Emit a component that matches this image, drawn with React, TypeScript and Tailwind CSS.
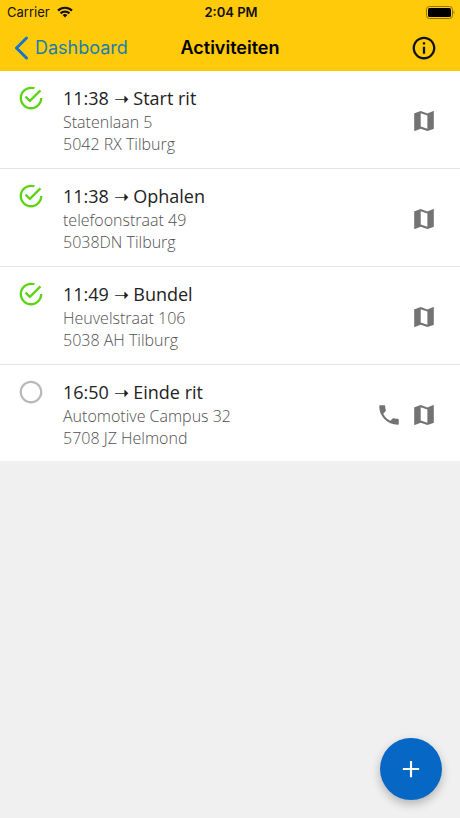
import { IoMdAdd, IoMdCall, IoMdCheckmarkCircleOutline, IoMdInformationCircleOutline, IoMdRadioButtonOff } from 'react-icons/io';

type Activity = {
  id: number;
  time: string;
  title: string;
  street: string;
  city: string;
  done: boolean;
  phone?: boolean;
};

const activities: Activity[] = [
  { id: 1, time: '11:38', title: 'Start rit', street: 'Statenlaan 5', city: '5042 RX Tilburg', done: true },
  { id: 2, time: '11:38', title: 'Ophalen', street: 'telefoonstraat 49', city: '5038DN Tilburg', done: true },
  { id: 3, time: '11:49', title: 'Bundel', street: 'Heuvelstraat 106', city: '5038 AH Tilburg', done: true },
  { id: 4, time: '16:50', title: 'Einde rit', street: 'Automotive Campus 32', city: '5708 JZ Helmond', done: false, phone: true },
];

function StatusBar() {
  return (
    <div className="grid grid-cols-3 items-center h-6 pl-[7px] pr-[5px] text-[13px] leading-6">
      <div className="flex items-center gap-[7px]">
        <span>Carrier</span>
        <svg className="w-4 h-3" viewBox="0 0 16 12" fill="none" stroke="currentColor" strokeWidth="2.2">
          <path d="M1 4.6a10 10 0 0 1 14 0" />
          <path d="M3.6 7.4a6.3 6.3 0 0 1 8.8 0" />
          <path d="M5.6 9.1a3.5 3.5 0 0 1 4.8 0L8 11.6z" fill="currentColor" stroke="none" />
        </svg>
      </div>
      <span className="text-center font-semibold">2:04 PM</span>
      <svg className="w-[29px] h-[13px] justify-self-end" viewBox="0 0 29 13">
        <rect x="0.5" y="0.5" width="26" height="12" rx="3" fill="none" stroke="#8f7100" />
        <rect x="2" y="2" width="23" height="9" rx="1.5" fill="#000" />
        <path d="M27.6 4.5c1.2.5 1.2 3.5 0 4z" fill="#8f7100" />
      </svg>
    </div>
  );
}

function MapIcon() {
  return (
    <svg className="w-5 h-5" viewBox="0 0 20 20" fill="currentColor" fillRule="evenodd">
      <path d="M.6 2.3 6.7 0l6.7 2.4L19.3.1c.3-.1.5 0 .5.3v17c0 .3-.1.4-.4.5L13.4 20l-6.7-2.3-6 2.2c-.3.1-.5 0-.5-.3v-17c0-.2.1-.3.4-.3zM6.7 2.2v13.3l6.7 2.3V4.5z" />
    </svg>
  );
}

function ActivityRow({ activity }: { activity: Activity }) {
  return (
    <li className="flex items-center pl-[17px] pr-[26px] pt-[15px] pb-[13px] border-b border-[#e4e4e4] last:border-b-0 last:pb-3">
      <div className="w-[46px] shrink-0 self-start -mt-0.5">
        {activity.done ? (
          <IoMdCheckmarkCircleOutline className="w-7 h-7 text-[#5bd310]" />
        ) : (
          <IoMdRadioButtonOff className="w-7 h-7 text-[#b9b9b9]" />
        )}
      </div>
      <div className="flex-1 min-w-0">
        <h2 className="text-[18px] leading-[25px] text-[#222]">
          {activity.time} ➝ {activity.title}
        </h2>
        <p className="text-[16px] leading-[22px] font-light text-[#505050]">{activity.street}</p>
        <p className="text-[16px] leading-[22px] font-light text-[#505050]">{activity.city}</p>
      </div>
      <div className="flex items-center gap-3 text-[#737373]">
        {activity.phone && (
          <button type="button" aria-label="Bellen">
            <IoMdCall className="w-[26px] h-[26px]" />
          </button>
        )}
        <button type="button" aria-label="Kaart">
          <MapIcon />
        </button>
      </div>
    </li>
  );
}

export default function App() {
  return (
    <div className="min-h-screen bg-[#f0f0f0] font-['Open_Sans',sans-serif]">
      <header className="bg-[#ffca0a] text-[#111] font-['Inter',sans-serif]">
        <StatusBar />
        <div className="grid grid-cols-[1fr_auto_1fr] items-center h-[47px] px-[22px]">
          <button type="button" className="flex items-center gap-1 -ml-2 text-[18px] text-[#1b80a8]">
            <svg className="w-[17px] h-6" viewBox="0 0 17 24" fill="none" stroke="#1276cf" strokeWidth="3" strokeLinecap="round" strokeLinejoin="round">
              <path d="M12.5 2L2.5 12l10 10" />
            </svg>
            Dashboard
          </button>
          <h1 className="text-center text-[18px] font-semibold text-black">Activiteiten</h1>
          <button type="button" aria-label="Info" className="justify-self-end">
            <IoMdInformationCircleOutline className="w-7 h-7" />
          </button>
        </div>
      </header>

      <main>
        <ul className="bg-white">
          {activities.map((activity) => (
            <ActivityRow key={activity.id} activity={activity} />
          ))}
        </ul>
      </main>

      <button
        type="button"
        aria-label="Toevoegen"
        className="fixed right-[18px] bottom-[18px] w-[62px] h-[62px] rounded-full bg-[#0767c5] text-white flex items-center justify-center shadow-[0_4px_10px_rgba(0,0,0,0.25)]"
      >
        <IoMdAdd className="w-[26px] h-[26px]" />
      </button>
    </div>
  );
}
